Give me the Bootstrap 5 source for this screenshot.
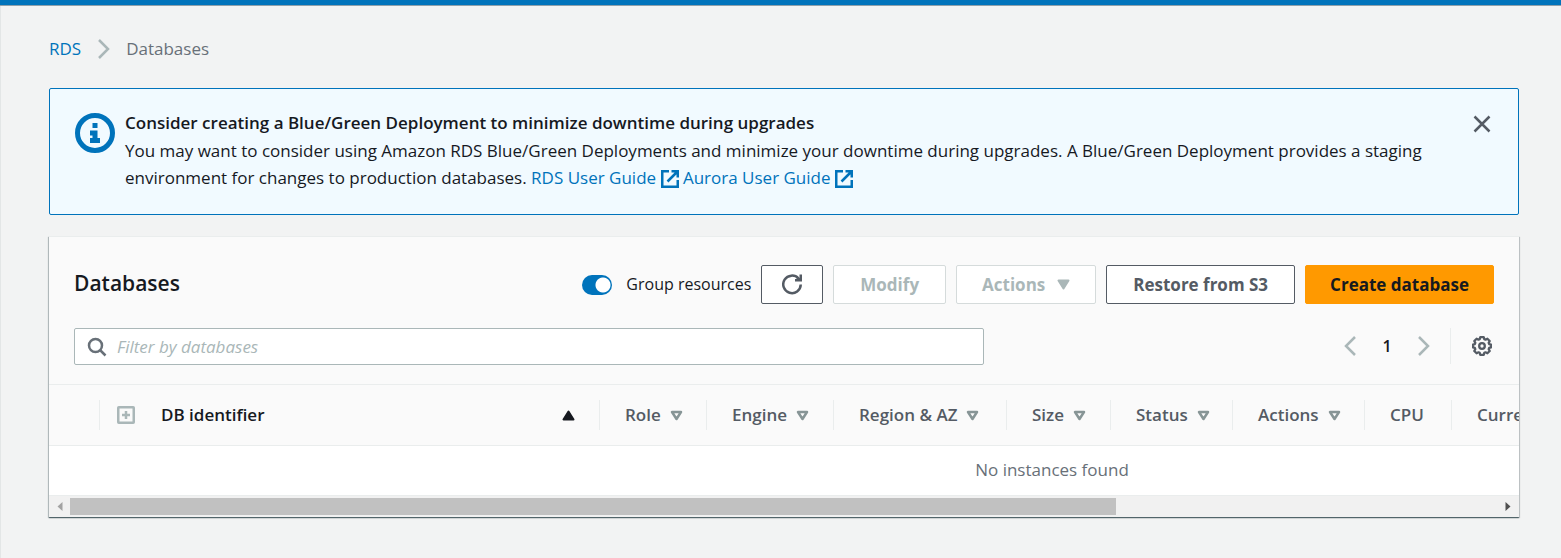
<!DOCTYPE html>
<html lang="en">
<head>
<meta charset="utf-8">
<meta name="viewport" content="width=device-width, initial-scale=1">
<title>RDS Databases</title>
<link href="https://cdn.jsdelivr.net/npm/bootstrap@5.3.0/dist/css/bootstrap.min.css" rel="stylesheet">
<style>
  :root { --ink: #16191f; --slate: #545b64; --mist: #aab7b8; --rule: #eaeded; --brand: #0073bb; }
  html { background: #f2f3f3; }
  body { font-family: "Open Sans", "Noto Sans", sans-serif; font-size: 17px; line-height: 27px; color: var(--ink); background: #f2f3f3; }
  svg { display: block; flex: none; }
  a { color: var(--brand); text-decoration: none; }
  .topbar { height: 6px; background: var(--brand); border-bottom: 1px solid #8fa0aa; }
  .page-body { min-height: calc(100vh - 6px); border-left: 1px solid #e3e6e6; padding: 29px 42px 40px 48px; }
  .crumbs { margin-bottom: 26px; }
  .crumb-now { color: #687078; }
  .notice { background: #f1faff; border: 1px solid var(--brand); border-radius: 2px; padding: 20px 25px 23px; }
  .notice-title { font-weight: 600; line-height: 28px; }
  .notice-icon { margin-top: 4px; }
  .notice-copy { margin: 0 40px 0 10px; }
  .notice-close { margin-top: 5px; }
  .ext { display: inline-block; vertical-align: -4px; }
  .bare { background: none; border: 0; padding: 0; color: var(--slate); }
  .bare:disabled { color: var(--mist); }
  .panel { background: #fff; margin-top: 21px; box-shadow: 0 1px 1px 0 rgba(0,28,36,.5), 1px 1px 1px 0 rgba(0,28,36,.15), -1px 1px 1px 0 rgba(0,28,36,.2); }
  .panel-top { background: #fafafa; border-top: 1px solid var(--rule); padding: 28px 25px 19px; }
  .panel-title { font-size: 21px; line-height: 27px; font-weight: 600; margin: 0; padding-bottom: 2px; }
  .tools { gap: 10px; }
  .tool { --bs-btn-font-weight: 700; --bs-btn-font-size: 17px; --bs-btn-line-height: 27px; --bs-btn-padding-x: 26px; --bs-btn-padding-y: 5px; --bs-btn-border-radius: 2px;
    --bs-btn-color: var(--slate); --bs-btn-bg: #fff; --bs-btn-border-color: var(--slate);
    --bs-btn-disabled-color: var(--mist); --bs-btn-disabled-bg: #fff; --bs-btn-disabled-border-color: #d5dbdb; --bs-btn-disabled-opacity: 1; }
  .tool-menu { --bs-btn-padding-x: 25px; gap: 12px; }
  .tool-icon { --bs-btn-padding-x: 20px; }
  .tool-main { --bs-btn-padding-x: 24px; --bs-btn-color: var(--ink); --bs-btn-bg: #f90; --bs-btn-border-color: #f90; }
  .grouping { font-size: 16px; gap: 14px; }
  .grouping .form-check-input { width: 30px; height: 20px; margin: 0; border: 0; background-color: var(--brand);
    background-image: radial-gradient(circle at 21px 10px, #fff 7px, transparent 8px); background-position: 0 0; background-size: 30px 20px; }
  .find { width: 910px; height: 37px; border: 1px solid var(--mist); border-radius: 2px; background: #fff; padding: 0 12px; gap: 10px; color: #687078; }
  .find input { border: 0; outline: 0; background: none; padding: 0; min-width: 0; color: var(--ink); }
  .find input::placeholder { color: var(--mist); font-style: italic; opacity: 1; }
  .search-row { margin-top: 24px; }
  .page-no { font-size: 16px; line-height: 24px; font-weight: 600; width: 54px; }
  .prefs { border-left: 1px solid var(--rule); height: 36px; margin-left: 20px; padding: 0 2px 0 21px; }
  .grid-view { overflow: hidden; }
  .db-table { table-layout: fixed; width: 2006px; margin: 0; border-collapse: separate; border-spacing: 0; }
  .db-table th { background: #fafafa; border-top: 1px solid var(--rule); border-bottom: 1px solid var(--rule); height: 62px; padding: 0; font-weight: 600; color: var(--slate); vertical-align: middle; }
  .db-table th > div { height: 30px; padding: 0 0 2px 25px; border-right: 1px solid var(--rule); white-space: nowrap; gap: 9px; }
  .db-table th svg { margin-top: 2px; }
  .db-table th:nth-child(2) > div { color: var(--ink); padding-left: 17px; padding-right: 24px; gap: 26px; }
  .db-table td { height: 50px; padding: 0 0 2px; border-bottom: 1px solid var(--rule); color: #687078; text-align: center; vertical-align: middle; }
  .c-pick { width: 51px; } .c-id { width: 500px; } .c-role { width: 107px; } .c-engine { width: 127px; } .c-region { width: 173px; }
  .c-size { width: 104px; } .c-status { width: 122px; } .c-actions { width: 132px; } .c-cpu { width: 87px; }
  .scroller { height: 21px; background: #f1f1f1; padding: 0 8px; }
  .rail { height: 17px; margin: 0 6px 0 7px; }
  .thumb { height: 17px; width: 73.2%; background: #c1c1c1; }
</style>
</head>
<body>
<div class="topbar"></div>
<main class="page-body">
  <nav class="crumbs d-flex align-items-center" aria-label="Breadcrumb">
    <a href="#">RDS</a>
    <svg class="mx-3" width="13" height="20" viewBox="-1 0 13 20" fill="none" stroke="#aab7b8" stroke-width="2.5"><path d="M1 1l9 9-9 9"/></svg>
    <span class="crumb-now">Databases</span>
  </nav>

  <section class="notice d-flex align-items-start">
    <svg class="notice-icon" width="40" height="40" viewBox="0 0 40 40"><circle cx="20" cy="20" r="17.5" fill="none" stroke="#0073bb" stroke-width="5"/><path fill="#0073bb" d="M17.5 10h5v5h-5zM15 17.5h7.500v7.500H25v5H15v-5h2.500v-2.500H15z"/></svg>
    <div class="notice-copy flex-grow-1">
      <div class="notice-title">Consider creating a Blue/Green Deployment to minimize downtime during upgrades</div>
      <div><span>You may want to consider using Amazon RDS Blue/Green Deployments and minimize your downtime during upgrades. A Blue/Green Deployment provides a staging environment for changes to production databases.</span>
        <a href="#">RDS User Guide <svg class="ext" width="18" height="18" viewBox="0 0 18 18" fill="none" stroke="currentColor" stroke-width="2.500"><path d="M8 1.250H1.250v15.500h15.500V10M10.500 1.250h6.250V7.500M16.500 1.500L6.500 11.500"/></svg></a>
        <a href="#">Aurora User Guide <svg class="ext" width="18" height="18" viewBox="0 0 18 18" fill="none" stroke="currentColor" stroke-width="2.500"><path d="M8 1.250H1.250v15.500h15.500V10M10.500 1.250h6.250V7.500M16.500 1.500L6.500 11.500"/></svg></a></div>
    </div>
    <button type="button" class="bare notice-close" aria-label="Dismiss"><svg width="22" height="20" viewBox="0 0 22 20" fill="none" stroke="currentColor" stroke-width="2.500"><path d="M3.500 2.500l15 15M18.500 2.500l-15 15"/></svg></button>
  </section>

  <section class="panel">
    <div class="panel-top">
      <div class="d-flex align-items-center justify-content-between">
        <h1 class="panel-title">Databases</h1>
        <div class="tools d-flex align-items-center">
          <div class="grouping form-switch d-flex align-items-center p-0">
            <input class="form-check-input" type="checkbox" role="switch" id="group" checked>
            <label for="group">Group resources</label>
          </div>
          <button type="button" class="btn tool tool-icon" aria-label="Refresh"><svg width="20" height="27" viewBox="0 0 20 27" fill="none" stroke="currentColor" stroke-width="2.500"><path d="M18.750 13.500A8.750 8.750 0 1 1 16.500 7.500M18.750 3.500v5.750H13M14.500 8.250h4"/></svg></button>
          <button type="button" class="btn tool" disabled>Modify</button>
          <button type="button" class="btn tool tool-menu d-flex align-items-center" disabled>Actions <svg width="13" height="11" viewBox="0 0 13 11"><path d="M1.500 1.500h10l-5 8z" fill="currentColor" stroke="currentColor" stroke-width="2" stroke-linejoin="round"/></svg></button>
          <button type="button" class="btn tool">Restore from S3</button>
          <button type="button" class="btn tool tool-main">Create database</button>
        </div>
      </div>
      <div class="search-row d-flex align-items-start justify-content-between">
        <div class="find d-flex align-items-center">
          <svg width="20" height="20" viewBox="0 0 20 20" fill="none" stroke="currentColor" stroke-width="2.500"><circle cx="8.500" cy="8.500" r="6.500"/><path d="M13 13l5.500 5.500"/></svg>
          <input class="flex-grow-1" type="text" placeholder="Filter by databases" aria-label="Filter by databases">
        </div>
        <div class="d-flex align-items-center">
          <button type="button" class="bare" disabled aria-label="Previous page"><svg width="12" height="20" viewBox="0 0 12 20" fill="none" stroke="currentColor" stroke-width="2.500"><path d="M11 1l-9 9 9 9"/></svg></button>
          <span class="page-no text-center mx-1">1</span>
          <button type="button" class="bare" disabled aria-label="Next page"><svg width="12" height="20" viewBox="0 0 12 20" fill="none" stroke="currentColor" stroke-width="2.500"><path d="M1 1l9 9-9 9"/></svg></button>
          <div class="prefs d-flex align-items-center">
            <button type="button" class="bare" aria-label="Preferences"><svg width="20" height="20" viewBox="0 0 20 20" fill="none" stroke="currentColor" stroke-width="2.300" stroke-linejoin="round"><path d="M8.300 1.200h3.400l.6 2 1.200.5 1.900-1 2.300 2.300-1 1.900.5 1.200 1.900.6v2.600l-1.900.6-.5 1.200 1 1.900-2.300 2.300-1.900-1-1.200.5-.6 2H8.300l-.6-2-1.200-.5-1.900 1-2.300-2.300 1-1.900-.5-1.200-1.900-.6V8.700l1.900-.6.500-1.200-1-1.900 2.300-2.300 1.900 1 1.200-.5z"/><circle cx="10" cy="10" r="2.800"/></svg></button>
          </div>
        </div>
      </div>
    </div>

    <div class="grid-view">
      <table class="db-table">
        <colgroup><col class="c-pick"><col class="c-id"><col class="c-role"><col class="c-engine"><col class="c-region"><col class="c-size"><col class="c-status"><col class="c-actions"><col class="c-cpu"><col></colgroup>
        <thead>
          <tr>
            <th><div></div></th>
            <th><div class="d-flex align-items-center"><svg width="18" height="18" viewBox="0 0 18 18" fill="none" stroke="#aab7b8" stroke-width="2.500"><rect x="1.250" y="1.250" width="15.500" height="15.500" rx=".5"/><path d="M9 5v8M5 9h8"/></svg><span>DB identifier</span><svg class="ms-auto" width="13" height="11" viewBox="0 0 13 11"><path d="M1.500 9.500h10l-5-8z" fill="#16191f" stroke="#16191f" stroke-width="2" stroke-linejoin="round"/></svg></div></th>
            <th><div class="d-flex align-items-center">Role <svg width="13" height="11" viewBox="0 0 13 11"><path d="M2 2h9L6.500 9z" fill="none" stroke="#879596" stroke-width="2.500" stroke-linejoin="round"/></svg></div></th>
            <th><div class="d-flex align-items-center">Engine <svg width="13" height="11" viewBox="0 0 13 11"><path d="M2 2h9L6.500 9z" fill="none" stroke="#879596" stroke-width="2.500" stroke-linejoin="round"/></svg></div></th>
            <th><div class="d-flex align-items-center">Region &amp; AZ <svg width="13" height="11" viewBox="0 0 13 11"><path d="M2 2h9L6.500 9z" fill="none" stroke="#879596" stroke-width="2.500" stroke-linejoin="round"/></svg></div></th>
            <th><div class="d-flex align-items-center">Size <svg width="13" height="11" viewBox="0 0 13 11"><path d="M2 2h9L6.500 9z" fill="none" stroke="#879596" stroke-width="2.500" stroke-linejoin="round"/></svg></div></th>
            <th><div class="d-flex align-items-center">Status <svg width="13" height="11" viewBox="0 0 13 11"><path d="M2 2h9L6.500 9z" fill="none" stroke="#879596" stroke-width="2.500" stroke-linejoin="round"/></svg></div></th>
            <th><div class="d-flex align-items-center">Actions <svg width="13" height="11" viewBox="0 0 13 11"><path d="M2 2h9L6.500 9z" fill="none" stroke="#879596" stroke-width="2.500" stroke-linejoin="round"/></svg></div></th>
            <th><div class="d-flex align-items-center">CPU</div></th>
            <th><div class="d-flex align-items-center">Current activity</div></th>
          </tr>
        </thead>
        <tbody><tr><td colspan="10">No instances found</td></tr></tbody>
      </table>
    </div>
    <div class="scroller d-flex align-items-center" aria-hidden="true">
      <svg width="6" height="10" viewBox="0 0 6 10"><path d="M5.500 0v9L.5 4.500z" fill="#a3a3a3"/></svg>
      <div class="rail flex-grow-1"><div class="thumb"></div></div>
      <svg width="6" height="10" viewBox="0 0 6 10"><path d="M.5 0v9l5-4.500z" fill="#505050"/></svg>
    </div>
  </section>
</main>
<script src="https://cdn.jsdelivr.net/npm/bootstrap@5.3.0/dist/js/bootstrap.bundle.min.js"></script>
</body>
</html>
